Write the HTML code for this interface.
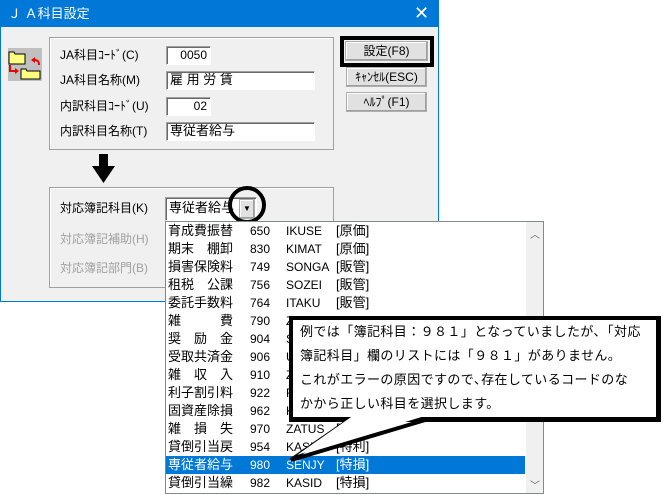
<!DOCTYPE html>
<html><head><meta charset="utf-8"><style>
*{margin:0;padding:0;box-sizing:border-box}
body{width:665px;height:495px;background:#fff;position:relative;overflow:hidden;font-family:"Liberation Sans","Noto Sans CJK JP",sans-serif;font-size:12px;color:#000}
.a{position:absolute}
.win{left:0;top:0;width:439px;height:302px;background:#f0f0f0;border:1px solid #0078d7}
.title{left:0;top:0;width:439px;height:27px;background:#0078d7;color:#fff;font-size:13px;line-height:27px;padding-left:8px}
.grp{border:1px solid #a0a0a0;box-shadow:inset 1px 1px 0 #fff}
.lbl{font-size:12px;line-height:14px}
.inp{background:#fff;border:1px solid #a0a0a0;border-right-color:#fff;border-bottom-color:#fff;box-shadow:inset 1px 1px 0 #696969;font-size:13px;line-height:16px;padding-left:3px}
.btn{background:#e1e1e1;border:1px solid #adadad;box-shadow:inset -1px -1px 0 #a0a0a0, inset 1px 1px 0 #fff;text-align:center;font-size:12px;line-height:18px}
.row{position:absolute;left:0;width:359px;height:18px;font-size:13px;line-height:18px}
.row span{position:absolute;top:0}
.c1{left:2px}.c2{left:84px;font-size:12px}.c3{left:120px;font-size:12px}.c4{left:170px}
.sel{background:#0078d7;color:#fff}
.dis{color:#a0a0a0}
</style></head><body>
<div class="a win"></div>
<div class="a title">Ｊ Ａ科目設定</div>
<div class="a" style="left:414px;top:3px;color:#fff;font-size:18px;line-height:20px">✕</div>

<svg class="a" style="left:8px;top:48px" width="34" height="33" viewBox="0 0 34 33">
<rect width="34" height="33" fill="#c0c0c0"/>
<path d="M1 4h5l1 2h10v10H1z" fill="#ffff80" stroke="#000"/>
<path d="M13 23h5l1 2h13v8H13z" fill="#ffff80" stroke="#000" transform="translate(0,-2)"/>
<path d="M23 12l4-3v2c3 0 5 2 5 6h-2c0-3-1-4-3-4v2z" fill="#e00"/>
<path d="M3 17v5h4v-2l4 3-4 3v-2H1v-7z" fill="#e00"/>
</svg>

<div class="a grp" style="left:49px;top:37px;width:285px;height:113px"></div>
<div class="a lbl" style="left:60px;top:48px">JA科目ｺｰﾄﾞ(C)</div>
<div class="a inp" style="left:166px;top:46px;width:45px;height:19px;text-align:right;padding-right:3px;font-size:12px">0050</div>
<div class="a lbl" style="left:60px;top:73px">JA科目名称(M)</div>
<div class="a inp" style="left:166px;top:71px;width:149px;height:19px">雇 用 労 賃</div>
<div class="a lbl" style="left:60px;top:99px">内訳科目ｺｰﾄﾞ(U)</div>
<div class="a inp" style="left:166px;top:97px;width:45px;height:19px;text-align:right;padding-right:3px;font-size:12px">02</div>
<div class="a lbl" style="left:60px;top:124px">内訳科目名称(T)</div>
<div class="a inp" style="left:166px;top:122px;width:149px;height:19px">専従者給与</div>

<div class="a" style="left:340px;top:36px;width:94px;height:31px;border:4px solid #000"></div>
<div class="a btn" style="left:345px;top:41px;width:83px;height:20px">設定(F8)</div>
<div class="a btn" style="left:346px;top:67px;width:81px;height:20px">ｷｬﾝｾﾙ(ESC)</div>
<div class="a btn" style="left:346px;top:92px;width:81px;height:20px">ﾍﾙﾌﾟ(F1)</div>

<svg class="a" style="left:92px;top:154px" width="24" height="30"><rect x="7" y="0" width="9" height="12" fill="#000"/><path d="M0 12h23L11.5 29z" fill="#000"/></svg>

<div class="a grp" style="left:49px;top:187px;width:285px;height:101px"></div>
<div class="a lbl" style="left:60px;top:201px">対応簿記科目(K)</div>
<div class="a lbl dis" style="left:60px;top:232px">対応簿記補助(H)</div>
<div class="a lbl dis" style="left:60px;top:261px">対応簿記部門(B)</div>
<div class="a inp" style="left:165px;top:197px;width:92px;height:24px;line-height:20px">専従者給与</div>
<div class="a btn" style="left:239px;top:199px;width:16px;height:20px;font-size:8px;line-height:18px">▼</div>
<div class="a" style="left:228px;top:186px;width:38px;height:38px;border:4px solid #000;border-radius:50%"></div>

<div class="a" style="left:165px;top:221px;width:379px;height:273px;background:#fff;border:1px solid #828790">
<div class="a" style="left:360px;top:0;width:17px;height:271px;background:#f0f0f0"></div>
<div class="a" style="left:364px;top:4px;font-size:10px;color:#606060">︿</div>
<div class="a" style="left:364px;top:255px;font-size:10px;color:#606060">﹀</div>
<div class="row" style="top:0"><span class="c1">育成費振替</span><span class="c2">650</span><span class="c3">IKUSE</span><span class="c4">[原価]</span></div>
<div class="row" style="top:18px"><span class="c1">期末　棚卸</span><span class="c2">830</span><span class="c3">KIMAT</span><span class="c4">[原価]</span></div>
<div class="row" style="top:36px"><span class="c1">損害保険料</span><span class="c2">749</span><span class="c3">SONGA</span><span class="c4">[販管]</span></div>
<div class="row" style="top:54px"><span class="c1">租税　公課</span><span class="c2">756</span><span class="c3">SOZEI</span><span class="c4">[販管]</span></div>
<div class="row" style="top:72px"><span class="c1">委託手数料</span><span class="c2">764</span><span class="c3">ITAKU</span><span class="c4">[販管]</span></div>
<div class="row" style="top:90px"><span class="c1">雑　　　費</span><span class="c2">790</span><span class="c3">ZATSU</span></div>
<div class="row" style="top:108px"><span class="c1">奨　励　金</span><span class="c2">904</span><span class="c3">S</span></div>
<div class="row" style="top:126px"><span class="c1">受取共済金</span><span class="c2">906</span><span class="c3">U</span></div>
<div class="row" style="top:144px"><span class="c1">雑　収　入</span><span class="c2">910</span><span class="c3">Z</span></div>
<div class="row" style="top:162px"><span class="c1">利子割引料</span><span class="c2">922</span><span class="c3">R</span></div>
<div class="row" style="top:180px"><span class="c1">固資産除損</span><span class="c2">962</span><span class="c3">K</span></div>
<div class="row" style="top:198px"><span class="c1">雑　損　失</span><span class="c2">970</span><span class="c3">ZATUS</span><span class="c4">[</span></div>
<div class="row" style="top:216px"><span class="c1">貸倒引当戻</span><span class="c2">954</span><span class="c3">KASI</span><span class="c4">[特利]</span></div>
<div class="row sel" style="top:234px"><span class="c1">専従者給与</span><span class="c2">980</span><span class="c3">SENJY</span><span class="c4">[特損]</span></div>
<div class="row" style="top:252px"><span class="c1">貸倒引当繰</span><span class="c2">982</span><span class="c3">KASID</span><span class="c4">[特損]</span></div>
</div>

<svg class="a" style="left:0;top:0" width="665" height="495">
<path d="M352 418 L291 460 L432 418" fill="#fff" stroke="#000" stroke-width="4"/>
</svg>
<div class="a" style="left:289px;top:316px;width:372px;height:106px;background:#fff;border:4px solid #000;border-right-width:5px;border-bottom-width:5px"></div>
<svg class="a" style="left:0;top:0" width="665" height="495"><path d="M354 415 L297 455 L428 415z" fill="#fff"/></svg>
<div class="a" style="left:300px;top:320px;width:360px;font-size:13px;line-height:24px;letter-spacing:0.4px;white-space:nowrap">例では「簿記科目：９８１」となっていましたが､「対応<br>簿記科目」欄のリストには「９８１」がありません。<br>これがエラーの原因ですので､存在しているコードのな<br>かから正しい科目を選択します。</div>
</body></html>
